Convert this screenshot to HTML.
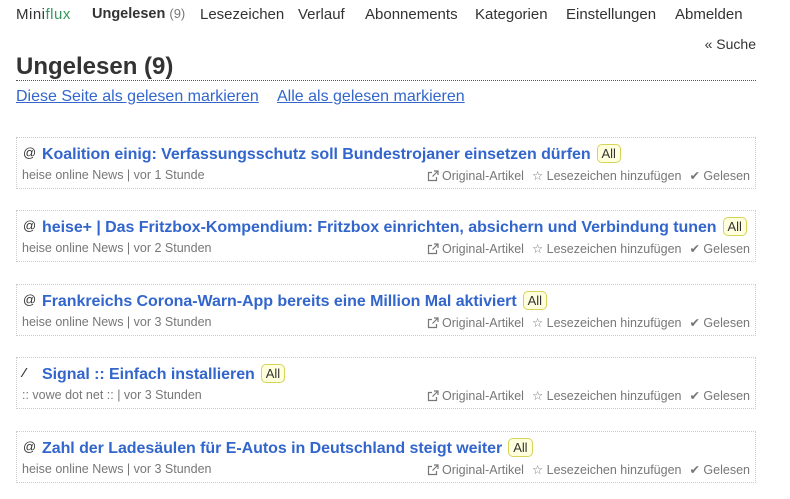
<!DOCTYPE html>
<html><head><meta charset="utf-8">
<style>
*{margin:0;padding:0;box-sizing:border-box}
body{width:790px;height:499px;background:#fff;font-family:"Liberation Sans",sans-serif;color:#333;position:relative;overflow:hidden}
.a{position:absolute;white-space:nowrap}
.nav{top:6px;font-size:15px;color:#333}
.nav small{color:#777;font-size:13px}
h1{position:absolute;left:16px;top:54px;width:740px;font-size:24px;font-weight:bold;color:#333;border-bottom:1px dotted #555;padding-bottom:0px;line-height:26px}
.lnk{top:88px;font-size:16px;color:#3366cc;text-decoration:underline}
.item{position:absolute;left:16px;width:740px;height:52px;border:1px dotted #ccc}
.t{position:absolute;left:25px;top:6px;font-size:16px;font-weight:bold;color:#3366cc;white-space:nowrap;letter-spacing:-0.05px}
.t .ic{position:absolute;left:-19px;top:1px;font-size:13px;color:#333;font-weight:normal}
.tag{display:inline-block;font-size:13px;font-weight:normal;color:#333;background:#ffffdd;border:1px solid #d5d458;border-radius:5px;padding:0 4px;margin-left:6px;line-height:17px;vertical-align:1px}
.m{position:absolute;left:5px;top:30px;font-size:12.5px;color:#777;white-space:nowrap}
.r{position:absolute;right:5px;top:30px;font-size:12.5px;color:#777;white-space:nowrap}
.r span{margin-left:8px}
.r svg{vertical-align:-2px;margin-right:3px}
</style></head><body>
<div class="a nav" style="left:16px;letter-spacing:0.5px">Mini<span style="color:#33995e">flux</span></div>
<div class="a nav" style="left:92px;font-weight:bold;color:#333;font-size:14.5px">Ungelesen <small style="font-weight:normal">(9)</small></div>
<div class="a nav" style="left:200px">Lesezeichen</div>
<div class="a nav" style="left:298px">Verlauf</div>
<div class="a nav" style="left:365px">Abonnements</div>
<div class="a nav" style="left:475px">Kategorien</div>
<div class="a nav" style="left:566px">Einstellungen</div>
<div class="a nav" style="left:675px">Abmelden</div>
<div class="a" style="right:34px;top:36px;font-size:14px;color:#333">« Suche</div>
<h1>Ungelesen (9)</h1>
<div class="a lnk" style="left:16px">Diese Seite als gelesen markieren</div>
<div class="a lnk" style="left:277px">Alle als gelesen markieren</div>
<svg width="0" height="0" style="position:absolute"><defs><symbol id="x" viewBox="0 0 12 12"><path d="M9.5 7v3.5h-8v-8H5M7 1h4v4M11 1L5.5 6.5" fill="none" stroke="#777" stroke-width="1.2"/></symbol></defs></svg>

<div class="item" style="top:137px"><div class="t"><span class="ic">@</span>Koalition einig: Verfassungsschutz soll Bundestrojaner einsetzen dürfen<span class="tag">All</span></div><div class="m">heise online News | vor 1 Stunde</div><div class="r"><svg width="12" height="12"><use href="#x"/></svg>Original-Artikel<span>☆ Lesezeichen hinzufügen</span><span>✔ Gelesen</span></div></div>
<div class="item" style="top:210px"><div class="t"><span class="ic">@</span>heise+ | Das Fritzbox-Kompendium: Fritzbox einrichten, absichern und Verbindung tunen<span class="tag">All</span></div><div class="m">heise online News | vor 2 Stunden</div><div class="r"><svg width="12" height="12"><use href="#x"/></svg>Original-Artikel<span>☆ Lesezeichen hinzufügen</span><span>✔ Gelesen</span></div></div>
<div class="item" style="top:284px"><div class="t"><span class="ic">@</span>Frankreichs Corona-Warn-App bereits eine Million Mal aktiviert<span class="tag">All</span></div><div class="m">heise online News | vor 3 Stunden</div><div class="r"><svg width="12" height="12"><use href="#x"/></svg>Original-Artikel<span>☆ Lesezeichen hinzufügen</span><span>✔ Gelesen</span></div></div>
<div class="item" style="top:357px"><div class="t"><span class="ic" style="font-weight:bold">⁄</span>Signal :: Einfach installieren<span class="tag">All</span></div><div class="m">:: vowe dot net :: | vor 3 Stunden</div><div class="r"><svg width="12" height="12"><use href="#x"/></svg>Original-Artikel<span>☆ Lesezeichen hinzufügen</span><span>✔ Gelesen</span></div></div>
<div class="item" style="top:431px"><div class="t"><span class="ic">@</span>Zahl der Ladesäulen für E-Autos in Deutschland steigt weiter<span class="tag">All</span></div><div class="m">heise online News | vor 3 Stunden</div><div class="r"><svg width="12" height="12"><use href="#x"/></svg>Original-Artikel<span>☆ Lesezeichen hinzufügen</span><span>✔ Gelesen</span></div></div>
</body></html>
